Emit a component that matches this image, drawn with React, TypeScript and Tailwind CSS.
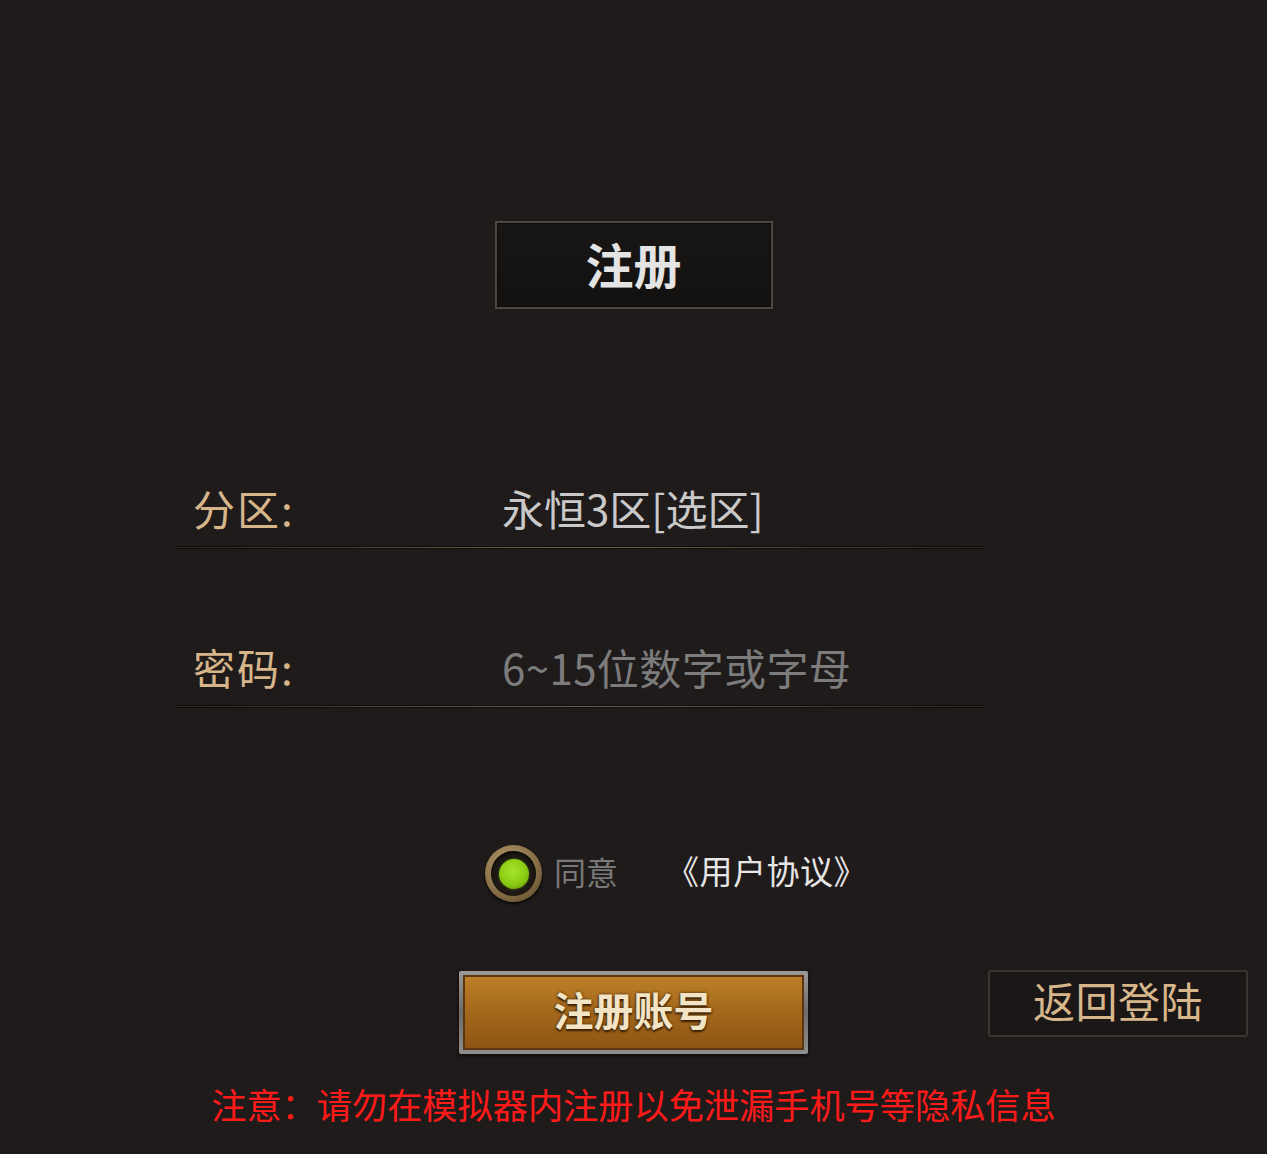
import { useState } from "react";

const cjk = "font-['Noto_Sans_CJK_SC','Noto_Sans',sans-serif]";

function FieldRow({
  label,
  value,
  placeholder,
}: {
  label: string;
  value?: string;
  placeholder?: string;
}) {
  return (
    <div>
      <div className="flex h-[56px] items-center pb-[7px]">
        <span className={`w-[326px] pl-[17px] text-[42px] leading-none tracking-[2px] text-[#d6b58b] ${cjk}`}>
          {label}
        </span>
        <span
          className={`text-[42px] leading-none ${cjk} ${
            value ? "text-[#c9c9c9]" : "tracking-[0.4px] text-[#7c7c7c]"
          }`}
        >
          {value ?? placeholder}
        </span>
      </div>
      <div className="mt-[7px] h-[3px] border-y border-[#0f0d0c] bg-[linear-gradient(90deg,#2b2721,#5c523f_35%,#6d624b_50%,#5c523f_65%,#2b2721)]" />
    </div>
  );
}

function RadioDot({ on }: { on: boolean }) {
  return (
    <div className="flex h-[57px] w-[57px] items-center justify-center rounded-full bg-[radial-gradient(circle_at_40%_35%,#b79e6e,#8a7148_55%,#4f3f26)] shadow-[0_2px_3px_rgba(0,0,0,0.7)]">
      <div className="flex h-[45px] w-[45px] items-center justify-center rounded-full bg-[#1f1a14] shadow-[inset_0_2px_4px_rgba(0,0,0,0.8)]">
        {on && (
          <div className="h-[30px] w-[30px] rounded-full bg-[radial-gradient(circle_at_45%_40%,#a6e42c,#8acb12_55%,#5c8a08)] shadow-[0_0_2px_rgba(140,200,20,0.6)]" />
        )}
      </div>
    </div>
  );
}

export default function App() {
  const [agree, setAgree] = useState(true);

  return (
    <div className="min-h-[1154px] w-full bg-[#1f1b1a] pt-[221px]">
      {/* heading plate */}
      <div className="flex justify-center">
        <div className="flex h-[88px] w-[278px] items-center justify-center border-2 border-[#4b4741] bg-[linear-gradient(180deg,#191716,#131110)] pb-[4px] shadow-[inset_0_0_0_1px_#0c0b0a]">
          <span className={`text-[48px] font-bold leading-none text-[#e4e4e4] ${cjk}`}>注册</span>
        </div>
      </div>

      {/* form fields */}
      <div className="ml-[176px] w-[809px]">
        <div className="mt-[174px]">
          <FieldRow label="分区:" value="永恒3区[选区]" />
        </div>
        <div className="mt-[93px]">
          <FieldRow label="密码:" placeholder="6~15位数字或字母" />
        </div>
      </div>

      {/* agreement */}
      <div className="mt-[139px] flex h-[56px] items-center pl-[485px]">
        <button onClick={() => setAgree(!agree)} className="-mt-[3px] cursor-pointer">
          <RadioDot on={agree} />
        </button>
        <span className={`mb-[9px] ml-[12px] text-[32px] leading-none text-[#787878] ${cjk}`}>同意</span>
        <span className={`mb-[9px] ml-[48px] text-[33px] leading-none tracking-[0.5px] text-[#e6e6e6] ${cjk}`}>
          《用户协议》
        </span>
      </div>

      {/* actions */}
      <div className="mt-[67px] grid grid-cols-[1fr_auto_1fr] items-start">
        <div />
        <button className="mt-[1px] h-[83px] w-[349px] rounded-[2px] bg-[linear-gradient(180deg,#9a9a9a,#6c6c6c_50%,#8e8e8e)] p-[4px] shadow-[0_2px_4px_rgba(0,0,0,0.7)]">
          <div className="flex h-full w-full items-center justify-center border-2 border-[#5e3510] bg-[linear-gradient(180deg,#bd7f29,#a66a1c_45%,#8e5514)] pb-[8px]">
            <span
              className={`text-[40px] font-bold leading-none text-[#f2e4c4] [text-shadow:0_2px_2px_#3a1f06,0_0_3px_#3a1f06] ${cjk}`}
            >
              注册账号
            </span>
          </div>
        </button>
        <div>
          <button className="ml-[180px] flex h-[67px] w-[260px] items-center justify-center rounded-[3px] border-2 border-[#393532] bg-[#1a1716] pb-[7px]">
            <span className={`text-[42px] leading-none tracking-[0.5px] text-[#d7b68b] ${cjk}`}>返回登陆</span>
          </button>
        </div>
      </div>

      {/* warning */}
      <p className={`mt-[26px] text-center text-[35.2px] leading-[48px] text-[#ff1a1a] ${cjk}`}>
        注意：请勿在模拟器内注册以免泄漏手机号等隐私信息
      </p>
    </div>
  );
}
